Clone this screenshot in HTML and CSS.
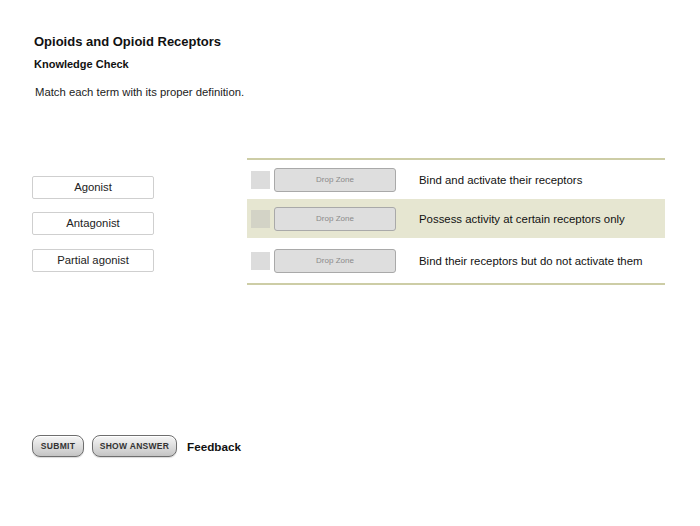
FILE: index.html
```html
<!DOCTYPE html>
<html>
<head>
<meta charset="utf-8">
<link rel="stylesheet" href="styles.css">
</head>
<body>
<div class="page">
  <h1 class="title">Opioids and Opioid Receptors</h1>
  <h2 class="subtitle">Knowledge Check</h2>
  <p class="prompt">Match each term with its proper definition.</p>
  <div class="activity">
    <div class="terms">
      <div class="term">Agonist</div>
      <div class="term">Antagonist</div>
      <div class="term">Partial agonist</div>
    </div>
    <div class="table">
      <div class="row">
        <div class="marker"></div>
        <div class="zone">Drop Zone</div>
        <div class="def">Bind and activate their receptors</div>
      </div>
      <div class="row alt">
        <div class="marker"></div>
        <div class="zone">Drop Zone</div>
        <div class="def">Possess activity at certain receptors only</div>
      </div>
      <div class="row last">
        <div class="marker"></div>
        <div class="zone">Drop Zone</div>
        <div class="def">Bind their receptors but do not activate them</div>
      </div>
    </div>
  </div>
  <div class="actions">
    <button class="btn btn-submit">SUBMIT</button>
    <button class="btn btn-show">SHOW ANSWER</button>
    <span class="feedback">Feedback</span>
  </div>
</div>
</body>
</html>
```

FILE: styles.css
```css
* { box-sizing: border-box; }
html, body { margin: 0; padding: 0; background: #fff; }
body {
  font-family: "Liberation Sans", Arial, sans-serif;
  color: #111;
  width: 700px;
  height: 526px;
  overflow: hidden;
}
.page {
  padding: 34px 0 0 34px;
}
.title {
  margin: 0;
  font-size: 13px;
  font-weight: bold;
  line-height: 16px;
}
.subtitle {
  margin: 7px 0 0 0;
  font-size: 11px;
  font-weight: bold;
  line-height: 14px;
}
.prompt {
  margin: 14px 0 0 1px;
  font-size: 11.3px;
  line-height: 14px;
  color: #222;
}
.activity {
  display: flex;
  margin-top: 59px;
  margin-left: -2px;
}
.terms {
  display: flex;
  flex-direction: column;
  gap: 13.5px;
  width: 122px;
  padding-top: 17.5px;
}
.term {
  height: 23px;
  border: 1px solid #cfcfcf;
  border-radius: 2px;
  background: #fff;
  font-size: 11.3px;
  line-height: 21px;
  text-align: center;
  color: #222;
}
.table {
  margin-left: 93px;
  width: 418px;
  border-top: 2px solid #cdcda6;
  border-bottom: 2px solid #cdcda6;
  display: flex;
  flex-direction: column;
}
.row {
  display: flex;
  align-items: center;
  height: 39px;
  padding-left: 4px;
}
.row.alt { background: #e6e6d1; }
.row.last { height: 45px; }
.marker {
  width: 19px;
  height: 18px;
  background: #dcdcdc;
}
.row.alt .marker { background: #d3d3c6; }
.zone {
  margin-left: 4px;
  width: 122px;
  height: 24px;
  border: 1px solid #a9a9a9;
  border-radius: 3px;
  background: #dedede;
  font-size: 8px;
  line-height: 22px;
  text-align: center;
  color: #8a8a8a;
}
.def {
  margin-left: 23px;
  font-size: 11.4px;
  color: #111;
}
.actions {
  display: flex;
  align-items: center;
  margin-top: 150px;
  margin-left: -2px;
}
.btn {
  height: 22px;
  border: 1px solid #6e6e6e;
  border-radius: 8px;
  background: linear-gradient(#f6f6f6, #d9d9d9 60%, #c4c4c4);
  box-shadow: inset 0 1px 0 #fff, 0 1px 1px rgba(0,0,0,0.15);
  font-family: "Liberation Sans", Arial, sans-serif;
  font-size: 8.5px;
  font-weight: bold;
  color: #333;
  padding: 0;
  letter-spacing: 0.3px;
}
.btn-submit { width: 52px; }
.btn-show { width: 85px; margin-left: 8px; }
.feedback {
  margin-left: 10px;
  font-size: 11.7px;
  font-weight: bold;
  color: #111;
}
```
